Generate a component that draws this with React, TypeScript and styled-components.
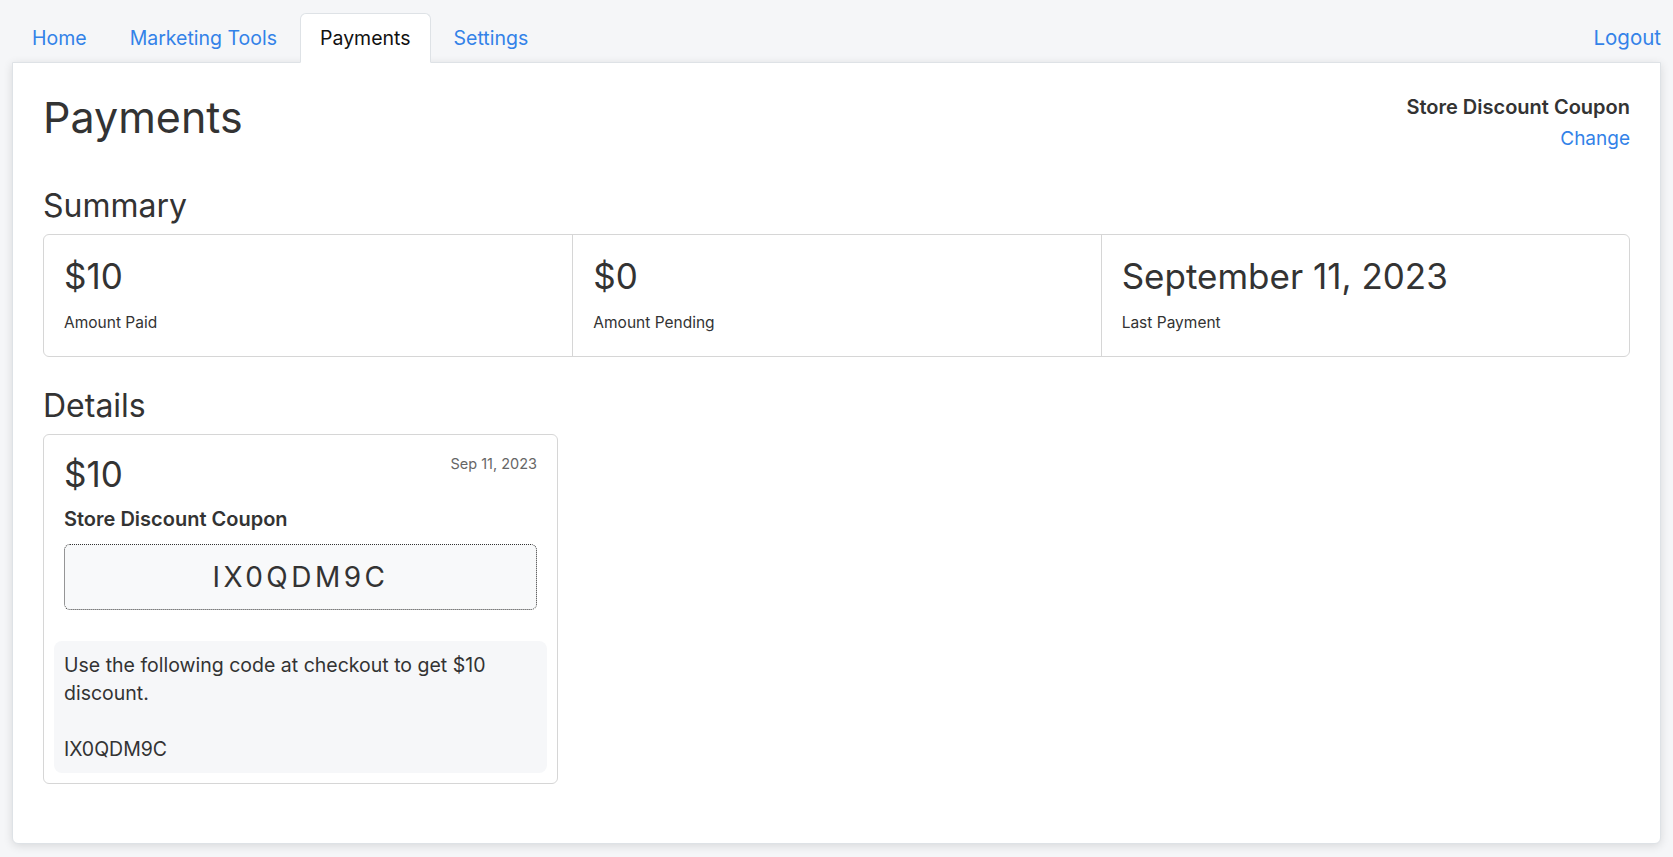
import React from 'react'
import styled, { createGlobalStyle } from 'styled-components';

const GlobalStyle = createGlobalStyle`
  body {
    margin: 0;
    background: #f5f6f8;
    font-family: "Inter", "Noto Sans", sans-serif;
    color: #333;
  }
  * { box-sizing: border-box; }
`;

const Page = styled.div`
  padding: 12px 12px 14px;
`;

const TabBar = styled.nav`
  display: flex;
  align-items: flex-end;
  height: 50px;
`;

const Tab = styled.a<{ $active?: boolean }>`
  display: flex;
  align-items: center;
  height: 50px;
  padding: 0 19px;
  margin-right: 3px;
  margin-bottom: -1px;
  font-size: 19.5px;
  text-decoration: none;
  cursor: pointer;
  border: 1px solid ${p => (p.$active ? '#dee2e6' : 'transparent')};
  border-bottom-color: ${p => (p.$active ? '#fff' : 'transparent')};
  border-radius: 6px 6px 0 0;
  background: ${p => (p.$active ? '#fff' : 'transparent')};
  color: ${p => (p.$active ? '#111' : '#3382e8')};
  position: relative;
  z-index: 1;
`;

const Logout = styled.a`
  margin-left: auto;
  align-self: center;
  font-size: 20.5px;
  color: #3382e8;
  text-decoration: none;
`;

const Panel = styled.main`
  background: #fff;
  border: 1px solid #dee2e6;
  border-radius: 0 0 6px 6px;
  box-shadow: 0 2px 10px rgba(0, 0, 0, 0.12);
  padding: 30px 30px 59px;
`;

const Header = styled.div`
  display: flex;
  justify-content: space-between;
  align-items: flex-start;
`;

const Title = styled.h1`
  margin: 0;
  font-size: 43px;
  line-height: 48px;
  font-weight: 400;
  color: #333;
`;

const Side = styled.div`
  display: flex;
  flex-direction: column;
  align-items: flex-end;
  gap: 8px;
  padding-top: 2px;
`;

const Strong = styled.div`
  font-size: 20px;
  line-height: 24px;
  font-weight: 600;
  color: #333;
`;

const Link = styled.a`
  font-size: 19px;
  line-height: 24px;
  color: #3382e8;
  text-decoration: none;
`;

const Section = styled.h2<{ $top: number }>`
  margin: ${p => p.$top}px 0 11px;
  font-size: 32px;
  line-height: 34px;
  font-weight: 400;
  color: #333;
`;

const Summary = styled.div`
  display: grid;
  grid-template-columns: repeat(3, 1fr);
  border: 1px solid #d6d6d6;
  border-radius: 6px;
`;

const Stat = styled.div`
  padding: 19px 20px 23px;
  & + & {
    border-left: 1px solid #d6d6d6;
  }
`;

const Value = styled.div`
  font-size: 35px;
  line-height: 44px;
  color: #333;
`;

const Label = styled.div`
  margin-top: 15px;
  font-size: 15.5px;
  line-height: 20px;
  color: #333;
`;

const Card = styled.div`
  width: 515px;
  border: 1px solid #d6d6d6;
  border-radius: 6px;
  padding: 17px 20px 10px;
`;

const CardTop = styled.div`
  display: flex;
  justify-content: space-between;
  align-items: flex-start;
`;

const CardDate = styled.span`
  margin-top: 3px;
  font-size: 14.5px;
  color: #666;
`;

const CardTitle = styled(Strong)`
  margin-top: 11px;
`;

const Code = styled.div`
  margin-top: 13px;
  height: 66px;
  display: flex;
  align-items: center;
  justify-content: center;
  background: #f8f9fa;
  border: 1.5px dotted #333;
  border-radius: 6px;
  font-size: 28px;
  letter-spacing: 3.5px;
  color: #333;
`;

const Note = styled.div`
  margin: 31px -10px 0;
  padding: 10px;
  background: #f6f7f9;
  border-radius: 8px;
  font-size: 19.5px;
  line-height: 28px;
  white-space: pre-line;
  color: #333;
`;

const stats = [
  { value: '$10', label: 'Amount Paid' },
  { value: '$0', label: 'Amount Pending' },
  { value: 'September 11, 2023', label: 'Last Payment' },
];

export default function App() {
  return (
    <>
      <GlobalStyle />
      <Page>
        <TabBar>
          <Tab>Home</Tab>
          <Tab>Marketing Tools</Tab>
          <Tab $active>Payments</Tab>
          <Tab>Settings</Tab>
          <Logout>Logout</Logout>
        </TabBar>
        <Panel>
          <Header>
            <Title>Payments</Title>
            <Side>
              <Strong>Store Discount Coupon</Strong>
              <Link>Change</Link>
            </Side>
          </Header>

          <Section $top={38}>Summary</Section>
          <Summary>
            {stats.map(s => (
              <Stat key={s.label}>
                <Value>{s.value}</Value>
                <Label>{s.label}</Label>
              </Stat>
            ))}
          </Summary>

          <Section $top={32}>Details</Section>
          <Card>
            <CardTop>
              <Value>$10</Value>
              <CardDate>Sep 11, 2023</CardDate>
            </CardTop>
            <CardTitle>Store Discount Coupon</CardTitle>
            <Code>IX0QDM9C</Code>
            <Note>{'Use the following code at checkout to get $10\ndiscount.\n\nIX0QDM9C'}</Note>
          </Card>
        </Panel>
      </Page>
    </>
  )
}
